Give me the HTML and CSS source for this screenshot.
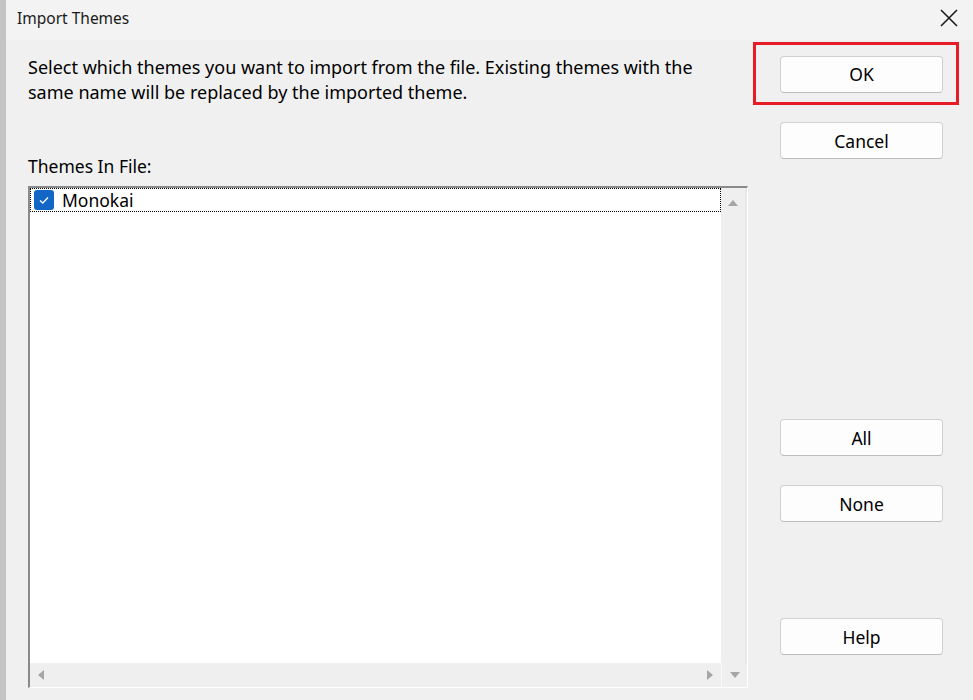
FILE: index.html
```html
<!DOCTYPE html>
<html lang="en">
<head>
    <meta charset="UTF-8">
    <title>Import Themes</title>
    <link rel="stylesheet" href="styles.css">
</head>
<body>
    <div class="window">
        <div class="titlebar">
            <span class="title">Import Themes</span>
            <span class="close">
                <svg width="18" height="18" viewBox="0 0 18 18"><path d="M1 1 L17 17 M17 1 L1 17" stroke="#1a1a1a" stroke-width="1.6" fill="none"/></svg>
            </span>
        </div>
        <div class="content">
            <div class="main">
                <p class="intro">Select which themes you want to import from the file. Existing themes with the same name will be replaced by the imported theme.</p>
                <div class="label">Themes In File:</div>
                <div class="listbox">
                    <div class="list-area">
                        <div class="items">
                            <div class="item">
                                <span class="check">
                                    <svg width="18" height="18" viewBox="0 0 18 18"><path d="M5 9.5 L7.8 12 L13 6.5" stroke="#fff" stroke-width="1.3" fill="none"/></svg>
                                </span>
                                Monokai
                            </div>
                        </div>
                        <div class="vscroll">
                            <span class="arrow up"></span>
                        </div>
                    </div>
                    <div class="hscroll-row">
                        <div class="hscroll">
                            <span class="arrow left"></span>
                            <span class="arrow right"></span>
                        </div>
                        <div class="corner">
                            <span class="arrow down"></span>
                        </div>
                    </div>
                </div>
            </div>
            <div class="side">
                <div class="highlight">
                    <button class="btn">OK</button>
                </div>
                <button class="btn cancel">Cancel</button>
                <div class="spacer"></div>
                <button class="btn">All</button>
                <button class="btn none">None</button>
                <div class="spacer small"></div>
                <button class="btn help">Help</button>
            </div>
        </div>
    </div>
</body>
</html>
```

FILE: styles.css
```css
* {
    margin: 0;
    padding: 0;
    box-sizing: border-box;
}

body {
    width: 973px;
    height: 700px;
    overflow: hidden;
    background: #f0f0f0;
    font-family: "Noto Sans", "Open Sans", Arial, sans-serif;
    color: #000;
}

.window {
    height: 700px;
    display: flex;
    flex-direction: column;
    border-left: 6px solid #c4c4c4;
    background: #f0f0f0;
}

.titlebar {
    height: 40px;
    background: #f3f3f3;
    display: flex;
    align-items: center;
    justify-content: space-between;
    padding-left: 11px;
    padding-right: 15px;
}

.title {
    font-size: 15.5px;
    color: #1a1a1a;
    margin-top: -4px;
}

.close {
    display: flex;
    margin-top: -4px;
}

.content {
    flex: 1;
    display: flex;
    padding-left: 22px;
}

.main {
    width: 720px;
    display: flex;
    flex-direction: column;
}

.intro {
    font-size: 18px;
    line-height: 25px;
    margin-top: 15px;
    width: 680px;
}

.label {
    font-size: 17.5px;
    margin-top: 49px;
    line-height: 24px;
}

.listbox {
    margin-top: 8px;
    width: 720px;
    height: 502px;
    border-top: 2px solid #8a8a8a;
    border-left: 2px solid #8a8a8a;
    border-right: 1px solid #ffffff;
    border-bottom: 1px solid #ffffff;
    background: #fff;
    display: flex;
    flex-direction: column;
}

.list-area {
    flex: 1;
    display: flex;
}

.items {
    flex: 1;
}

.item {
    height: 24px;
    border: 1px dotted #000;
    display: flex;
    align-items: center;
    font-size: 17.5px;
    padding-left: 3px;
    gap: 8px;
}

.check {
    width: 20px;
    height: 20px;
    border-radius: 3px;
    background: #1166c6;
    display: flex;
    align-items: center;
    justify-content: center;
}

.vscroll {
    width: 26px;
    background: #efefef;
    border-right: 2px solid #e8e8e8;
    display: flex;
    justify-content: center;
    padding-top: 12px;
}

.hscroll-row {
    height: 24px;
    display: flex;
}

.hscroll {
    flex: 1;
    background: #efefef;
    display: flex;
    justify-content: space-between;
    align-items: center;
    padding: 0 8px;
}

.corner {
    width: 26px;
    background: #efefef;
    border-left: 1px solid #f8f8f8;
    display: flex;
    justify-content: center;
    align-items: center;
}

.arrow {
    width: 0;
    height: 0;
    border: 5px solid transparent;
}

.arrow.up {
    border-bottom: 6px solid #a6a6a6;
    border-top-width: 0;
}

.arrow.down {
    border-top: 6px solid #a6a6a6;
    border-bottom-width: 0;
}

.arrow.left {
    border-right: 6px solid #a6a6a6;
    border-left-width: 0;
}

.arrow.right {
    border-left: 6px solid #a6a6a6;
    border-right-width: 0;
}

.side {
    width: 200px;
    display: flex;
    flex-direction: column;
    margin-left: 5px;
}

.highlight {
    width: 206px;
    height: 63px;
    margin-top: 2px;
    border: 3px solid #e81c27;
    display: flex;
    align-items: center;
    justify-content: center;
    padding-left: 11px;
}

.btn {
    width: 163px;
    height: 37px;
    background: #fdfdfd;
    border: 1px solid #d0d0d0;
    border-bottom-color: #bcbcbc;
    border-radius: 4px;
    font-family: inherit;
    font-size: 17.5px;
    color: #000;
    margin-left: 27px;
}

.highlight .btn {
    margin-left: 0;
    margin-top: 1px;
}

.cancel {
    margin-top: 17px;
}

.spacer {
    height: 260px;
}

.none {
    margin-top: 29px;
}

.spacer.small {
    height: 96px;
}
```
